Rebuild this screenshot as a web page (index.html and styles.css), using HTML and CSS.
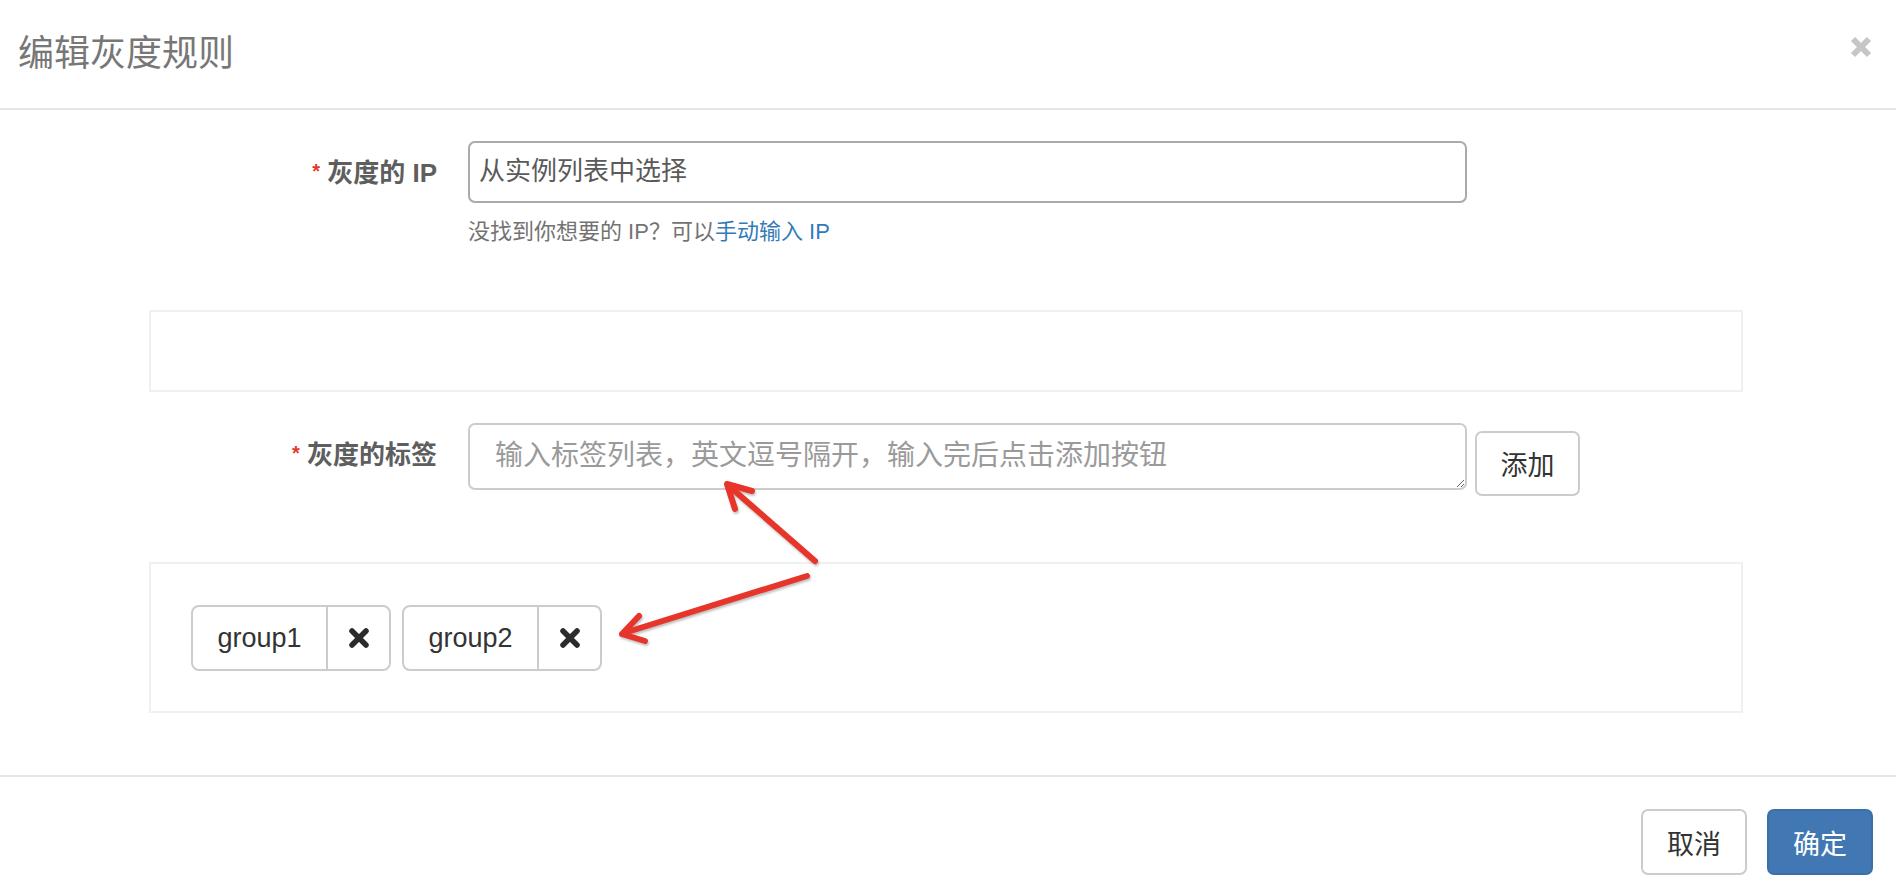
FILE: index.html
```html
<!DOCTYPE html>
<html lang="zh-CN">
<head>
    <meta charset="UTF-8">
    <title>编辑灰度规则</title>
    <link rel="stylesheet" href="styles.css">
</head>
<body>
    <div class="modal">
        <!-- Заголовок окна -->
        <div class="modal-header">
            <h4 class="modal-title">编辑灰度规则</h4>
            <button class="close" type="button">
                <svg width="24" height="24" viewBox="0 0 24 24"><path d="M4 4 L20 20 M20 4 L4 20" stroke="#c6c6c6" stroke-width="6" stroke-linecap="butt"/></svg>
            </button>
        </div>

        <!-- Тело формы -->
        <div class="modal-body">
            <div class="form-row">
                <label class="form-label"><span class="req">*</span> 灰度的 IP</label>
                <div class="select-box">从实例列表中选择</div>
            </div>
            <p class="help">没找到你想要的 IP？可以<a href="#">手动输入 IP</a></p>

            <div class="panel panel-empty"></div>

            <div class="form-row">
                <label class="form-label"><span class="req">*</span> 灰度的标签</label>
                <textarea class="tag-input" placeholder="输入标签列表，英文逗号隔开，输入完后点击添加按钮"></textarea>
                <button class="btn btn-add" type="button">添加</button>
            </div>

            <div class="panel panel-tags">
                <div class="tag">
                    <span class="tag-name">group1</span>
                    <span class="tag-remove"><svg width="20" height="20" viewBox="0 0 20 20"><path d="M3 3 L17 17 M17 3 L3 17" stroke="#2b2b2b" stroke-width="5.5" stroke-linecap="round"/></svg></span>
                </div>
                <div class="tag">
                    <span class="tag-name">group2</span>
                    <span class="tag-remove"><svg width="20" height="20" viewBox="0 0 20 20"><path d="M3 3 L17 17 M17 3 L3 17" stroke="#2b2b2b" stroke-width="5.5" stroke-linecap="round"/></svg></span>
                </div>
            </div>
        </div>

        <!-- Кнопки внизу -->
        <div class="modal-footer">
            <button class="btn btn-cancel" type="button">取消</button>
            <button class="btn btn-primary" type="button">确定</button>
        </div>

        <!-- Красные стрелки-пометки поверх формы -->
        <svg class="arrows" width="1896" height="896" viewBox="0 0 1896 896">
            <g stroke="#e8352b" stroke-width="6" stroke-linecap="round" stroke-linejoin="round" fill="none">
                <path d="M815 561 L729 486"/>
                <path d="M752 491 L727 484 L735 509"/>
                <path d="M807 576 L624 633"/>
                <path d="M639 616 L622 634 L645 641"/>
            </g>
        </svg>
    </div>
</body>
</html>
```

FILE: styles.css
```css
/* Общие стили */
body {
    margin: 0;
    background-color: #fff;
    font-family: "Liberation Sans", "Noto Sans CJK SC", sans-serif;
    color: #333;
}

.modal {
    position: relative;
    width: 1896px;
    height: 896px;
}

/* Заголовок */
.modal-header {
    height: 108px;
    border-bottom: 2px solid #e5e5e5;
    display: flex;
    justify-content: space-between;
    align-items: center;
    padding: 0 23px 0 18px;
}

.modal-title {
    margin: 0;
    font-size: 36px;
    font-weight: normal;
    color: #777;
    line-height: 1;
}

.close {
    align-self: flex-start;
    margin-top: 35px;
    padding: 0;
    border: none;
    background: none;
    width: 24px;
    height: 24px;
}

/* Тело */
.modal-body {
    padding-top: 31px;
}

.form-row {
    display: flex;
    align-items: flex-start;
}

.form-label {
    width: 437px;
    flex: none;
    text-align: right;
    font-size: 26px;
    font-weight: bold;
    color: #5e5e5e;
    line-height: 36px;
    padding-top: 12px;
    margin-right: 31px;
}

.req {
    color: #e0382e;
    font-size: 20px;
    vertical-align: 4px;
}

.select-box {
    width: 999px;
    height: 62px;
    box-sizing: border-box;
    border: 2px solid #aaa;
    border-radius: 7px;
    padding: 0 9px;
    font-size: 26px;
    line-height: 56px;
    color: #5a5a5a;
}

.help {
    margin: 14px 0 0 468px;
    font-size: 22px;
    line-height: 30px;
    color: #737373;
}

.help a {
    color: #337ab7;
    text-decoration: none;
}

.panel {
    margin-left: 149px;
    width: 1594px;
    box-sizing: border-box;
    border: 2px solid #f0f0f0;
}

.panel-empty {
    margin-top: 63px;
    height: 82px;
    margin-bottom: 31px;
}

.tag-input {
    width: 999px;
    height: 67px;
    box-sizing: border-box;
    border: 2px solid #ccc;
    border-radius: 7px;
    padding: 12px 25px;
    font-family: "Liberation Sans", "Noto Sans CJK SC", sans-serif;
    font-size: 28px;
    line-height: 38px;
    resize: vertical;
    margin: 0;
}

.tag-input::placeholder {
    color: #9a9a9a;
}

.btn {
    font-family: "Liberation Sans", "Noto Sans CJK SC", sans-serif;
    font-size: 27px;
    border-radius: 7px;
    border: 2px solid #ccc;
    background: #fff;
    color: #333;
    height: 66px;
    width: 106px;
    padding: 0;
    box-sizing: border-box;
}

.btn-add {
    margin: 8px 0 0 8px;
    height: 65px;
    width: 105px;
}

.panel-tags {
    margin-top: 66px;
    height: 151px;
    padding: 41px 40px 0;
    display: flex;
    align-items: flex-start;
    gap: 11px;
}

/* Тег с кнопкой удаления */
.tag {
    display: flex;
    height: 66px;
    box-sizing: border-box;
    border: 2px solid #ccc;
    border-radius: 8px;
}

.tag-name {
    width: 133px;
    text-align: center;
    font-size: 27px;
    line-height: 62px;
    color: #333;
    border-right: 2px solid #ccc;
}

.tag-remove {
    width: 61px;
    display: flex;
    align-items: center;
    justify-content: center;
}

/* Подвал */
.modal-footer {
    margin-top: 62px;
    border-top: 2px solid #e5e5e5;
    padding: 32px 23px 0 0;
    display: flex;
    justify-content: flex-end;
    gap: 20px;
}

.btn-primary {
    background-color: #4178b3;
    border-color: #3a6fa8;
    color: #fff;
}

.arrows {
    position: absolute;
    left: 0;
    top: 0;
    pointer-events: none;
    filter: drop-shadow(1px 2px 1px rgba(0, 0, 0, 0.25));
}
```
